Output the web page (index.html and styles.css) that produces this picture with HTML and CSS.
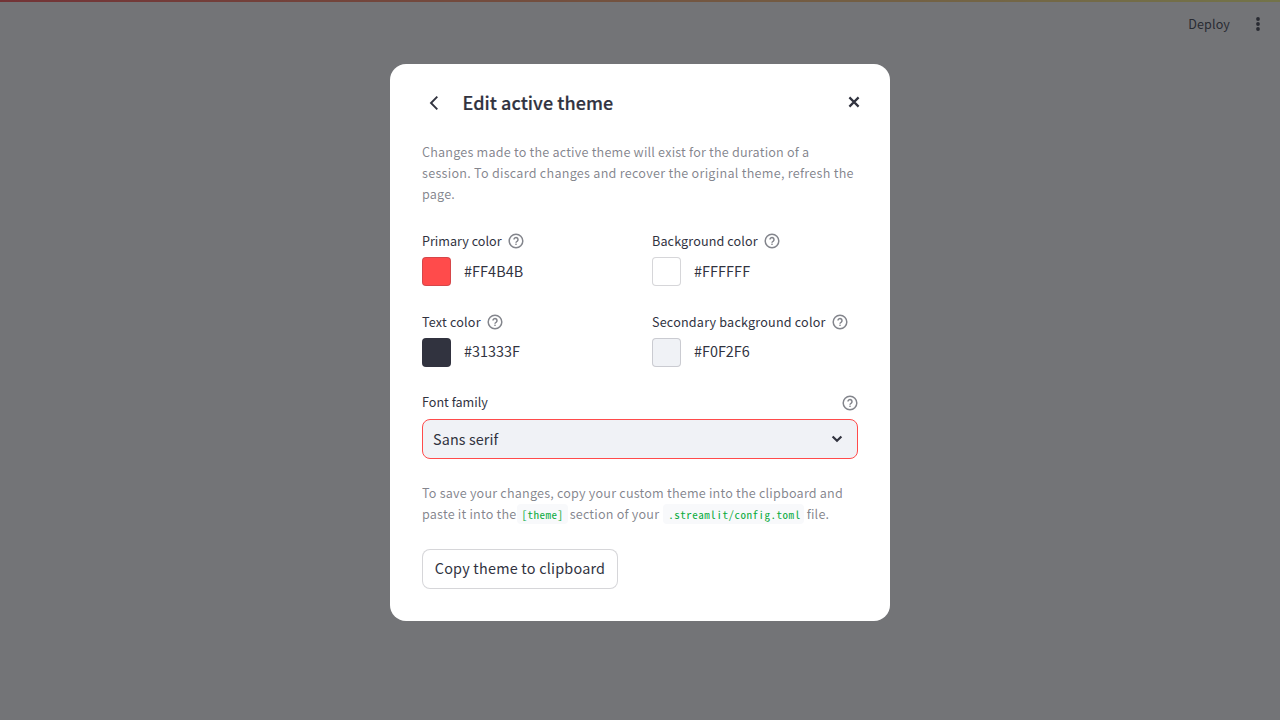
FILE: index.html
```html
<!DOCTYPE html>
<html lang="en">
<head>
<meta charset="utf-8">
<title>Edit active theme</title>
<link rel="stylesheet" href="styles.css">
</head>
<body>
<svg width="0" height="0" class="defs" aria-hidden="true">
  <symbol id="help" viewBox="0 0 16 16"><g fill="none" stroke="currentColor" stroke-width="1.5"><circle cx="8" cy="8" r="6.8"/><path d="M6 6.6a2 2 0 1 1 3.3 1.5C8.5 8.7 8 9 8 9.8"/></g><rect x="7.3" y="10.6" width="1.4" height="1.4" fill="currentColor"/></symbol>
</svg>
<div class="app">
  <div class="decoration"></div>
  <header class="toolbar">
    <span class="deploy">Deploy</span>
    <svg class="dots" width="16" height="16" viewBox="0 0 16 16" fill="currentColor"><circle cx="8" cy="3" r="1.9"/><circle cx="8" cy="8" r="1.9"/><circle cx="8" cy="13" r="1.9"/></svg>
  </header>
</div>
<div class="backdrop">
  <main class="modal">
    <div class="modal-header">
      <svg class="back" width="24" height="24" viewBox="0 0 24 24"><path d="M15.3 5.6 9 12l6.3 6.4" fill="none" stroke="currentColor" stroke-width="1.9"/></svg>
      <h1>Edit active theme</h1>
      <svg class="close" width="12" height="12" viewBox="0 0 12 12"><path d="M1.4 1.4l9.2 9.2M10.6 1.4 1.4 10.6" stroke="currentColor" stroke-width="2.2"/></svg>
    </div>
    <p class="note intro">Changes made to the active theme will exist for the duration of a<br><span class="wide">session. To discard changes and recover the original theme, refresh the</span><br>page.</p>
    <div class="colors">
      <div class="field">
        <div class="label"><span>Primary color</span><svg class="help"><use href="#help"/></svg></div>
        <div class="value"><i class="swatch primary"></i><span>#FF4B4B</span></div>
      </div>
      <div class="field">
        <div class="label snug"><span>Background color</span><svg class="help"><use href="#help"/></svg></div>
        <div class="value"><i class="swatch background"></i><span>#FFFFFF</span></div>
      </div>
      <div class="field">
        <div class="label spaced"><span>Text color</span><svg class="help"><use href="#help"/></svg></div>
        <div class="value raised"><i class="swatch text"></i><span>#31333F</span></div>
      </div>
      <div class="field">
        <div class="label spaced"><span>Secondary background color</span><svg class="help"><use href="#help"/></svg></div>
        <div class="value raised"><i class="swatch secondary"></i><span>#F0F2F6</span></div>
      </div>
    </div>
    <div class="label font-label"><span>Font family</span><svg class="help"><use href="#help"/></svg></div>
    <div class="select"><span>Sans serif</span><svg width="12" height="8" viewBox="0 0 12 8"><path d="M1.6 1.5 6 5.8l4.4-4.3" fill="none" stroke="currentColor" stroke-width="2.2"/></svg></div>
    <p class="note save">To save your changes, copy your custom theme into the clipboard and<br>paste it into the <code>[theme]</code> section of your <code>.streamlit/config.toml</code> file.</p>
    <button class="copy">Copy theme to clipboard</button>
  </main>
</div>
</body>
</html>
```
FILE: styles.css
```css
* { box-sizing: border-box; }
body {
  margin: 0;
  height: 720px;
  overflow: hidden;
  background: #fff;
  color: #31333f;
  font-family: "Noto Sans CJK SC", sans-serif;
  font-size: 12.6px;
}
svg { display: block; flex: none; }
.defs { position: absolute; }
.decoration {
  height: 2px;
  background: linear-gradient(90deg, #ff4b4b, #fffd80);
}
.toolbar {
  height: 44px;
  padding-right: 14px;
  display: flex;
  align-items: center;
  justify-content: flex-end;
  gap: 20px;
}
.deploy { padding-bottom: 2px; letter-spacing: 0.1px; }
.dots { width: 16px; height: 16px; }
.backdrop {
  position: fixed;
  inset: 0;
  padding-top: 64px;
  background: rgba(37, 39, 44, 0.645);
}
.modal {
  width: 500px;
  height: 557px;
  margin: 0 auto;
  padding: 24px 32px 32px;
  background: #fff;
  border-radius: 16px;
}
.modal-header {
  display: flex;
  align-items: center;
  height: 30px;
}
h1 {
  margin: 0 auto 0 16.5px;
  padding-bottom: 2px;
  font-family: "Noto Sans CJK SC Medium", "Noto Sans CJK SC", sans-serif;
  font-size: 18px;
  font-weight: 600;
  line-height: 30px;
  letter-spacing: 0.06px;
  -webkit-text-stroke: 0.2px currentColor;
}
.close { margin: 0 -2px 2px 0; }
.note {
  margin: 0;
  color: rgba(49, 51, 63, 0.6);
  line-height: 21px;
  letter-spacing: 0.19px;
  white-space: nowrap;
}
.wide { letter-spacing: 0.255px; }
.intro { margin-top: 23px; }
.colors {
  margin-top: 26px;
  display: grid;
  grid-template-columns: 206px 206px;
  column-gap: 24px;
  row-gap: 23px;
}
.field { height: 58px; }
.label {
  height: 22px;
  display: flex;
  align-items: center;
  gap: 6px;
  white-space: nowrap;
}
.label span { padding-bottom: 2px; }
.spaced span { letter-spacing: 0.19px; }
.snug span { letter-spacing: 0.12px; }
.help { width: 16px; height: 16px; color: #83858c; }
.value {
  margin-top: 5px;
  display: flex;
  align-items: center;
  gap: 13px;
  font-size: 14.4px;
  line-height: 27px;
}
.value span { padding-bottom: 2px; letter-spacing: 0.07px; }
.raised span { padding-bottom: 4px; line-height: 25px; letter-spacing: 0; }
.swatch {
  width: 29px;
  height: 29px;
  border: 1px solid rgba(49, 51, 63, 0.2);
  border-radius: 4px;
}
.primary { background: #ff4b4b; }
.background { background: #fff; }
.text { background: #31333f; }
.secondary { background: #f0f2f6; }
.font-label {
  margin-top: 22px;
  justify-content: space-between;
}
.font-label .help { margin-top: 2px; }
.select {
  margin-top: 6px;
  height: 40px;
  padding: 0 14px 0 10px;
  display: flex;
  align-items: center;
  justify-content: space-between;
  border: 1px solid #ff4b4b;
  border-radius: 8px;
  background: #f0f2f6;
  font-size: 14.4px;
}
.select span { padding-bottom: 2px; letter-spacing: 0.1px; }
.save { margin-top: 23px; }
code {
  margin: 0 -1px 0 -2px;
  padding: 2px 4px;
  border-radius: 4px;
  background: #f8f9fb;
  color: #09ab3b;
  font-family: "Noto Sans Mono CJK SC", "Liberation Mono", monospace;
  font-size: 11px;
  letter-spacing: 0.52px;
}
code + code { margin: 0 0 0 1px; padding: 2px 3px 2px 5px; }
.copy {
  display: block;
  margin-top: 24px;
  width: 196px;
  height: 40px;
  padding: 0 0 3px;
  border: 1px solid rgba(49, 51, 63, 0.2);
  border-radius: 8px;
  background: #fff;
  color: inherit;
  font-family: inherit;
  font-size: 14.4px;
  letter-spacing: 0.22px;
}
```
